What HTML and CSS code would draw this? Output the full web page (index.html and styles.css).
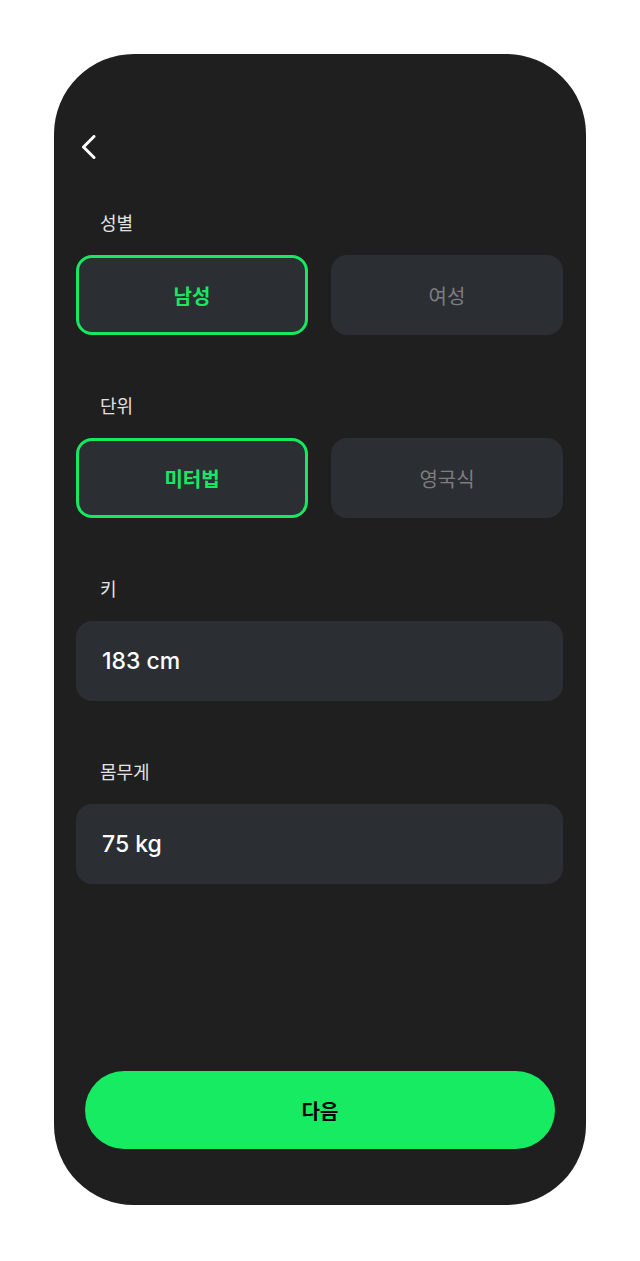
FILE: index.html
```html
<!DOCTYPE html>
<html lang="ko">
<head>
<meta charset="utf-8">
<link rel="stylesheet" href="styles.css">
</head>
<body>
<div class="phone">
  <div class="header">
    <svg class="back" width="24" height="24" viewBox="0 0 24 24"><path d="M18 1.5 L7.5 12 L18 22.5" fill="none" stroke="#fff" stroke-width="3" stroke-linecap="round" stroke-linejoin="round"/></svg>
  </div>
  <div class="content">
    <div class="section">
      <div class="label">성별</div>
      <div class="choices">
        <div class="choice active">남성</div>
        <div class="choice">여성</div>
      </div>
    </div>
    <div class="section">
      <div class="label">단위</div>
      <div class="choices">
        <div class="choice active">미터법</div>
        <div class="choice">영국식</div>
      </div>
    </div>
    <div class="section">
      <div class="label">키</div>
      <div class="field">183 cm</div>
    </div>
    <div class="section">
      <div class="label">몸무게</div>
      <div class="field">75 kg</div>
    </div>
  </div>
  <div class="footer">
    <div class="next">다음</div>
  </div>
</div>
</body>
</html>
```

FILE: styles.css
```css
* { box-sizing: border-box; }
html, body { margin: 0; padding: 0; background: #ffffff; }
body {
  font-family: Inter, "Noto Sans CJK KR", sans-serif;
  padding: 54px 0 0 54px;
}
.phone {
  width: 532px;
  height: 1151px;
  background: #1f1f1f;
  border-radius: 80px;
  display: flex;
  flex-direction: column;
  padding: 71px 23px 56px 22px;
}
.header {
  height: 44px;
  display: flex;
  align-items: center;
}
.back { display: block; }
.content {
  flex: 1;
  display: flex;
  flex-direction: column;
  gap: 58px;
  margin-top: 41px;
}
.section {
  display: flex;
  flex-direction: column;
  gap: 21px;
}
.label {
  font-family: "Noto Sans CJK KR", sans-serif;
  font-size: 18px;
  line-height: 24px;
  color: #e2e2e2;
  padding-left: 24px;
}
.choices {
  display: grid;
  grid-template-columns: 1fr 1fr;
  gap: 23px;
}
.choice {
  height: 80px;
  border-radius: 16px;
  background: #2b2e33;
  display: flex;
  align-items: center;
  justify-content: center;
  font-family: "Noto Sans CJK KR", sans-serif;
  font-size: 20px;
  color: #7d7d7f;
}
.choice.active {
  border: 3px solid #17e862;
  color: #17e862;
  font-weight: 700;
}
.field {
  height: 80px;
  border-radius: 16px;
  background: #2b2e33;
  display: flex;
  align-items: center;
  padding-left: 26px;
  font-size: 23px;
  font-weight: 500;
  color: #ffffff;
}
.footer {
  padding: 0 8px 0 9px;
}
.next {
  height: 78px;
  border-radius: 39px;
  background: #16eb62;
  display: flex;
  align-items: center;
  justify-content: center;
  font-family: "Noto Sans CJK KR", sans-serif;
  font-size: 20px;
  font-weight: 700;
  color: #000;
}
```
